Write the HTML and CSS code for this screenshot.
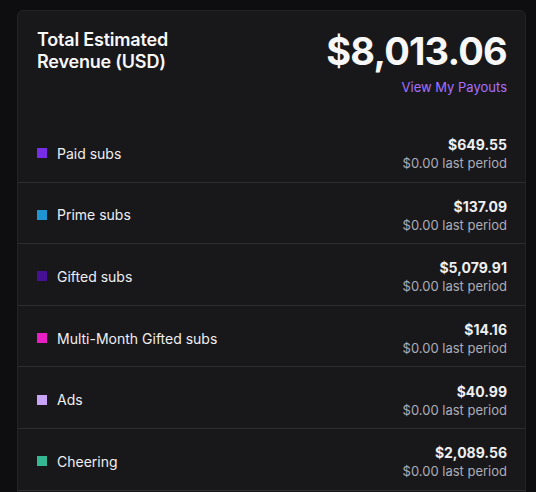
FILE: index.html
```html
<!DOCTYPE html>
<html>
<head>
<meta charset="utf-8">
<link rel="stylesheet" href="styles.css">
</head>
<body>
<div class="card">
  <div class="header">
    <div class="title">Total Estimated<br>Revenue (USD)</div>
    <div class="total">
      <div class="total-amount">$8,013.06</div>
      <a class="payouts">View My Payouts</a>
    </div>
  </div>
  <div class="row">
    <div class="label"><span class="swatch paid"></span>Paid subs</div>
    <div class="values"><div class="amount">$649.55</div><div class="last">$0.00 last period</div></div>
  </div>
  <div class="row">
    <div class="label"><span class="swatch prime"></span>Prime subs</div>
    <div class="values"><div class="amount">$137.09</div><div class="last">$0.00 last period</div></div>
  </div>
  <div class="row">
    <div class="label"><span class="swatch gifted"></span>Gifted subs</div>
    <div class="values"><div class="amount">$5,079.91</div><div class="last">$0.00 last period</div></div>
  </div>
  <div class="row">
    <div class="label"><span class="swatch multi"></span>Multi-Month Gifted subs</div>
    <div class="values"><div class="amount">$14.16</div><div class="last">$0.00 last period</div></div>
  </div>
  <div class="row">
    <div class="label"><span class="swatch ads"></span>Ads</div>
    <div class="values"><div class="amount">$40.99</div><div class="last">$0.00 last period</div></div>
  </div>
  <div class="row">
    <div class="label"><span class="swatch cheer"></span>Cheering</div>
    <div class="values"><div class="amount">$2,089.56</div><div class="last">$0.00 last period</div></div>
  </div>
</div>
</body>
</html>
```
FILE: styles.css
```css
html, body {
  margin: 0;
  padding: 0;
  background: #0e0e10;
  font-family: Inter, "Noto Sans", sans-serif;
  color: #efeff1;
}
body {
  padding: 10px 10px 0 17px;
}
.card {
  background: #18181b;
  border: 1px solid #222227;
  border-radius: 6px;
  overflow: hidden;
  padding-bottom: 24px;
}
.header {
  display: flex;
  justify-content: space-between;
  align-items: flex-start;
  padding: 18px 18px 0 19px;
  height: 92px;
}
.title {
  font-size: 18px;
  font-weight: 600;
  line-height: 22px;
  letter-spacing: -0.2px;
  color: #f7f7f8;
}
.total {
  display: flex;
  flex-direction: column;
  align-items: flex-end;
}
.total-amount {
  font-size: 38px;
  font-weight: 700;
  line-height: 44px;
  letter-spacing: -0.8px;
  color: #f7f7f8;
}
.payouts {
  color: #a970ff;
  font-size: 13px;
  line-height: 18px;
  margin-top: 5px;
}
.row {
  display: flex;
  justify-content: space-between;
  align-items: center;
  box-sizing: border-box;
  height: 61.6px;
  padding: 4px 18px 0 19px;
  border-bottom: 1px solid #2c2c31;
}
.label {
  display: flex;
  align-items: center;
  font-size: 14px;
}
.swatch {
  width: 10px;
  height: 10px;
  margin-right: 10px;
}
.paid { background: #772ce8; }
.prime { background: #1f94d2; }
.gifted { background: #451093; }
.multi { background: #e91ec5; }
.ads { background: #c9a3f5; }
.cheer { background: #34b894; }
.values {
  text-align: right;
  padding-top: 1px;
}
.amount {
  font-size: 14px;
  font-weight: 700;
  line-height: 19px;
}
.last {
  font-size: 13px;
  color: #adadb8;
  line-height: 18px;
}
```
